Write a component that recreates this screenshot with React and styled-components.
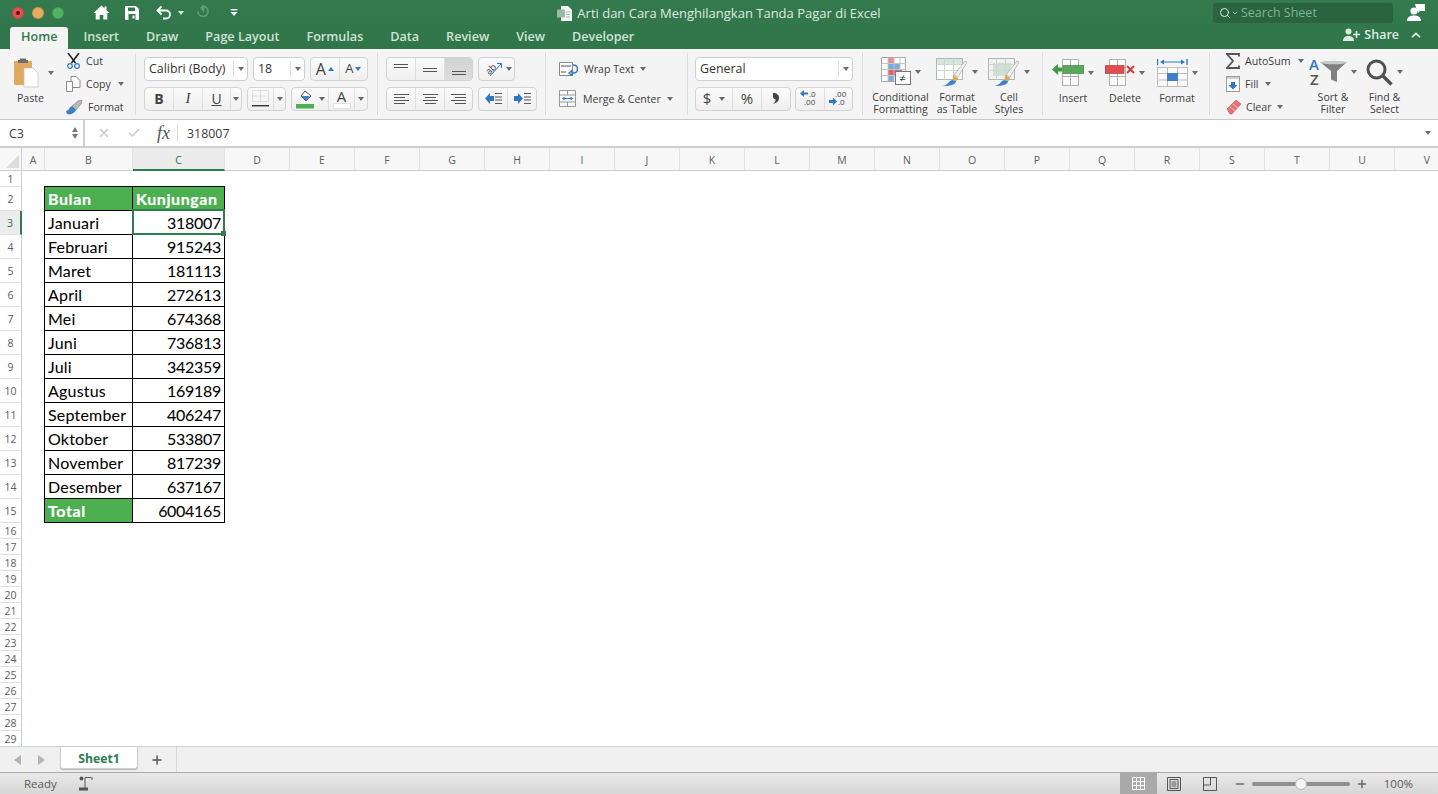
import React from 'react';
import styled, { createGlobalStyle } from 'styled-components';
import { Search, ChevronUp, ChevronDown, Plus, Minus, X, Check } from 'lucide-react';

const GlobalStyle = createGlobalStyle`
  html, body { margin: 0; padding: 0; height: 100%; background: #fff; }
  body { font-family: "Open Sans", "Liberation Sans", sans-serif; color: #3b3b3b; }
  * { box-sizing: border-box; }
`;

const Page = styled.div`
  width: 1438px;
  height: 794px;
  display: flex;
  flex-direction: column;
  overflow: hidden;
`;

/* window header */
const Header = styled.header`
  height: 49px;
  background: linear-gradient(#35794f, #30764a);
  color: #fff;
`;

const TitleBar = styled.div`
  height: 25px;
  display: grid;
  grid-template-columns: 1fr auto 1fr;
  align-items: center;
`;

const QuickAccess = styled.div`
  display: flex;
  align-items: center;
  padding-left: 12px;
`;

const Light = styled.span`
  width: 12px;
  height: 12px;
  border-radius: 50%;
  margin-right: 8px;
  background: ${p => p.$color};
  display: flex;
  align-items: center;
  justify-content: center;
  box-shadow: inset 0 0 0 1px rgba(0, 0, 0, 0.12);
  &::after {
    content: '';
    display: ${p => (p.$dot ? 'block' : 'none')};
    width: 4px;
    height: 4px;
    border-radius: 50%;
    background: #5d1210;
  }
`;

const Quick = styled.span`
  display: flex;
  align-items: center;
  margin-left: ${p => p.$gap}px;
`;

const DocTitle = styled.div`
  display: flex;
  align-items: center;
  gap: 5px;
  padding-top: 1px;
  font-size: 13px;
  color: #dcebe1;
`;

const TitleRight = styled.div`
  display: flex;
  justify-content: flex-end;
  align-items: center;
  padding-right: 12px;
`;

const SearchBox = styled.div`
  width: 180px;
  height: 20px;
  margin-right: 14px;
  padding-left: 6px;
  border-radius: 3px;
  background: #2a6340;
  display: flex;
  align-items: center;
  font-size: 12.5px;
  font-weight: 500;
  color: #7fb594;
`;

const SearchLabel = styled.span`
  margin-left: 2px;
`;

const TabRow = styled.nav`
  height: 24px;
  display: flex;
  justify-content: space-between;
  align-items: flex-end;
  padding: 0 15px 0 10px;
`;

const Tabs = styled.div`
  display: flex;
  align-items: flex-end;
  gap: 27px;
`;

const Tab = styled.span`
  height: 22px;
  line-height: 20px;
  font-size: 12.6px;
  font-weight: 600;
  color: ${p => (p.$active ? '#2f7a4d' : '#cfe3d6')};
  background: ${p => (p.$active ? '#f4f4f4' : 'transparent')};
  border-radius: 3px 3px 0 0;
  padding: ${p => (p.$active ? '0 11px' : '0')};
  margin-right: ${p => (p.$active ? '-12px' : '0')};
`;

const Share = styled.div`
  height: 24px;
  display: flex;
  align-items: center;
  gap: 4px;
  font-size: 12.5px;
  font-weight: 600;
  color: #dcebe1;
  padding-bottom: 5px;
`;

/* ribbon */
const Ribbon = styled.section`
  height: 71px;
  display: flex;
  background: #f4f4f4;
  border-bottom: 1px solid #c9c9c9;
`;

const Group = styled.div`
  flex: 0 0 ${p => p.$w}px;
  height: 62px;
  margin-top: 4px;
  padding: ${p => (p.$tools ? '0' : '4px')} 0 0 ${p => p.$pad}px;
  border-right: ${p => (p.$last ? 'none' : '1px solid #dcdcdc')};
  display: flex;
  flex-direction: ${p => (p.$stack ? 'column' : 'row')};
  gap: ${p => (p.$stack ? '7px' : '0')};
`;

const Row = styled.div`
  height: 23px;
  display: flex;
  align-items: center;
  gap: ${p => p.$gap ?? 5}px;
`;

const Combo = styled.div`
  width: ${p => p.$w}px;
  height: 24px;
  display: flex;
  align-items: center;
  justify-content: space-between;
  background: #fff;
  border: 1px solid #d0d0d0;
  border-radius: 4px;
  font-size: 12.4px;
  color: #333;
  padding-left: 4px;
`;

const ComboArrow = styled.span`
  width: 14px;
  height: 16px;
  border-left: 1px solid #e0e0e0;
  display: flex;
  align-items: center;
  justify-content: center;
`;

const Caret = styled.span`
  display: inline-block;
  flex: none;
  width: 0;
  height: 0;
  margin-left: ${p => p.$left || 0}px;
  border-left: 3px solid transparent;
  border-right: 3px solid transparent;
  border-top: 4px solid ${p => p.$color || '#6b6b6b'};
  transform: ${p => (p.$up ? 'rotate(180deg)' : 'none')};
`;

const SegGroup = styled.div`
  width: ${p => p.$w}px;
  height: 24px;
  display: flex;
  background: linear-gradient(#fbfbfb, #f0f0f0);
  border: 1px solid #d3d3d3;
  border-radius: 4px;
  overflow: hidden;
`;

const Seg = styled.span`
  flex: ${p => (p.$w ? `0 0 ${p.$w}px` : '1')};
  display: flex;
  align-items: center;
  justify-content: center;
  gap: 2px;
  color: #444;
  background: ${p => (p.$on ? 'linear-gradient(#d2d2d2, #dedede)' : 'transparent')};
  border-right: ${p => (p.$end ? 'none' : '1px solid #dedede')};
`;

const FontLetter = styled.span`
  font-family: ${p => (p.$serif ? '"Liberation Serif", serif' : '"Open Sans", sans-serif')};
  font-size: ${p => p.$size || 14}px;
  font-weight: ${p => (p.$bold ? 700 : 400)};
  font-style: ${p => (p.$italic ? 'italic' : 'normal')};
  text-decoration: ${p => (p.$under ? 'underline' : 'none')};
  line-height: 1;
`;

const ColorLetter = styled.span`
  display: flex;
  flex-direction: column;
  align-items: center;
  font-size: 15px;
  line-height: 14px;
  &::after {
    content: '';
    width: 16px;
    height: 4px;
    background: #fff;
    border: 1px solid #e2e2e2;
  }
`;

const LargeTool = styled.div`
  flex: 0 0 ${p => p.$w}px;
  display: flex;
  flex-direction: column;
  align-items: center;
`;

const PasteTool = styled(LargeTool)`
  align-items: flex-start;
`;

const IconSlot = styled.div`
  height: 39px;
  display: flex;
  align-items: center;
  gap: 4px;
`;

const ToolLabel = styled.div`
  font-size: 10.6px;
  line-height: 12px;
  text-align: center;
  color: #3d3d3d;
  white-space: nowrap;
  margin-left: ${p => p.$left || 0}px;
`;

const SmallList = styled.div`
  flex: 0 0 ${p => p.$w}px;
  margin-left: ${p => p.$left || 0}px;
  display: flex;
  flex-direction: column;
  gap: 7px;
`;

const SmallTool = styled.div`
  height: 16px;
  display: flex;
  align-items: center;
  gap: ${p => p.$gap ?? 5}px;
  font-size: 10.6px;
  color: #3d3d3d;
`;

const WideTool = styled.div`
  display: flex;
  align-items: center;
  gap: 5px;
  font-size: 10.6px;
  color: #3d3d3d;
`;

/* formula bar */
const FormulaBar = styled.div`
  height: 28px;
  display: flex;
  align-items: center;
  background: #fff;
  border-bottom: 2px solid #cfcfcf;
  font-size: 12.4px;
`;

const NameBox = styled.div`
  width: 85px;
  height: 100%;
  padding: 0 5px 0 9px;
  display: flex;
  align-items: center;
  justify-content: space-between;
  border-right: 2px solid #cfcfcf;
`;

const Stepper = styled.div`
  display: flex;
  flex-direction: column;
  gap: 2px;
`;

const StepArrow = styled.span`
  width: 0;
  height: 0;
  border-left: 3px solid transparent;
  border-right: 3px solid transparent;
  border-${p => (p.$up ? 'bottom' : 'top')}: 5px solid #777;
`;

const FormulaTools = styled.div`
  display: flex;
  align-items: center;
  gap: 16px;
  padding-left: 12px;
  color: #c8c8c8;
`;

const Fx = styled.span`
  font-family: "Liberation Serif", serif;
  font-style: italic;
  font-size: 18px;
  line-height: 18px;
  color: #555;
  padding-right: 7px;
  border-right: 1px solid #ddd;
`;

const FormulaValue = styled.span`
  margin-left: 9px;
  flex: 1;
`;

const BarCaret = styled(Caret)`
  margin-right: 7px;
`;

/* sheet */
const Sheet = styled.main`
  flex: 1;
  min-height: 0;
  display: flex;
  flex-direction: column;
  overflow: hidden;
`;

const ColHeader = styled.div`
  height: 23px;
  flex: none;
  display: flex;
  background: #f7f7f7;
  border-bottom: 1px solid #cfcfcf;
`;

const Corner = styled.div`
  flex: 0 0 22px;
  border-right: 1px solid #cfcfcf;
  display: flex;
  align-items: flex-end;
  justify-content: flex-end;
  padding: 0 2px 2px 0;
`;

const ColCell = styled.div`
  flex: 0 0 ${p => p.$w}px;
  display: flex;
  align-items: center;
  justify-content: center;
  font-size: 10.5px;
  padding-top: 2px;
  color: ${p => (p.$on ? '#2b7a4b' : '#5c5c5c')};
  background: ${p => (p.$on ? '#ececec' : 'transparent')};
  border-right: 1px solid #e2e2e2;
  border-bottom: ${p => (p.$on ? '2px solid #2f7d4f' : 'none')};
  margin-bottom: ${p => (p.$on ? '-1px' : '0')};
`;

const SheetBody = styled.div`
  flex: 1;
  min-height: 0;
  display: flex;
`;

const RowHeader = styled.div`
  flex: 0 0 22px;
  border-right: 1px solid #cfcfcf;
`;

const RowCell = styled.div`
  height: ${p => p.$h}px;
  display: flex;
  align-items: center;
  justify-content: center;
  font-size: 10.5px;
  color: ${p => (p.$on ? '#2b7a4b' : '#5c5c5c')};
  background: ${p => (p.$on ? '#ececec' : '#fff')};
  border-bottom: 1px solid #e2e2e2;
  border-right: ${p => (p.$on ? '2px solid #2f7d4f' : 'none')};
  margin-right: ${p => (p.$on ? '-1px' : '0')};
`;

const Canvas = styled.div`
  flex: 1;
  padding: 15px 0 0 22px;
  background: #fff;
`;

const DataTable = styled.div`
  display: grid;
  grid-template-columns: 88px 92px;
  grid-auto-rows: 24px;
  width: 181px;
  border-top: 1px solid #000;
  border-left: 1px solid #000;
`;

const DataCell = styled.div`
  position: relative;
  display: flex;
  align-items: center;
  justify-content: ${p => (p.$num ? 'flex-end' : 'flex-start')};
  padding: 0 3px;
  font-family: Lato, "Open Sans", sans-serif;
  font-size: 16px;
  font-weight: ${p => (p.$head ? 700 : 400)};
  letter-spacing: ${p => (p.$head ? '0.6px' : p.$num ? '-0.3px' : '0.2px')};
  -webkit-text-stroke: ${p => (p.$head ? '0.2px' : '0.05px')};
  color: ${p => (p.$head ? '#fff' : '#000')};
  background: ${p => (p.$head ? '#4caf50' : '#fff')};
  border-right: 1px solid #000;
  border-bottom: 1px solid #000;
  white-space: nowrap;
`;

const Selection = styled.span`
  position: absolute;
  z-index: 1;
  inset: -2px -1px -1px -1px;
  border: 2px solid #2f7d4f;
  &::after {
    content: '';
    position: absolute;
    right: -3px;
    bottom: -3px;
    width: 5px;
    height: 5px;
    background: #2f7d4f;
  }
`;

/* bottom bars */
const TabBar = styled.div`
  height: 26px;
  flex: none;
  display: flex;
  background: #f0f0f0;
  border-top: 1px solid #cfcfcf;
`;

const SheetNav = styled.div`
  width: 60px;
  display: flex;
  align-items: center;
  gap: 17px;
  padding-left: 14px;
`;

const NavArrow = styled.span`
  width: 0;
  height: 0;
  border-top: 5px solid transparent;
  border-bottom: 5px solid transparent;
  border-${p => (p.$left ? 'right' : 'left')}: 7px solid #b4b4b4;
`;

const SheetTab = styled.div`
  width: 78px;
  height: 22px;
  padding-top: 1px;
  display: flex;
  align-items: center;
  justify-content: center;
  font-size: 12.2px;
  font-weight: 700;
  color: #2f7d4f;
  background: #fff;
  border: 1px solid #d0d0d0;
  border-top: none;
  border-radius: 0 0 3px 3px;
  box-shadow: 0 1px 1px rgba(0, 0, 0, 0.25);
`;

const AddSheet = styled.div`
  width: 39px;
  display: flex;
  align-items: center;
  justify-content: center;
  color: #555;
  border-right: 1px solid #d8d8d8;
`;

const StatusBar = styled.footer`
  height: 22px;
  flex: none;
  display: flex;
  align-items: center;
  justify-content: space-between;
  padding-left: 24px;
  background: linear-gradient(#e9e9e9, #d6d6d6);
  border-top: 1px solid #a9a9a9;
  font-size: 11.5px;
  color: #5a5a5a;
`;

const StatusLeft = styled.div`
  display: flex;
  align-items: center;
  gap: 22px;
`;

const StatusRight = styled.div`
  height: 100%;
  display: flex;
  align-items: center;
  padding-right: 25px;
`;

const ViewButton = styled.span`
  width: ${p => p.$w}px;
  height: 100%;
  display: flex;
  align-items: center;
  justify-content: center;
  background: ${p => (p.$on ? '#a9a9a9' : 'transparent')};
`;

const ZoomMinus = styled(Minus)`
  margin-left: 6px;
`;

const ZoomTrack = styled.div`
  position: relative;
  width: 98px;
  height: 4px;
  margin: 0 6px;
  border-radius: 2px;
  background: #8f8f8f;
`;

const ZoomThumb = styled.span`
  position: absolute;
  left: 43px;
  top: -4px;
  width: 12px;
  height: 12px;
  border-radius: 50%;
  background: #f5f5f5;
  border: 1px solid #b5b5b5;
`;

const ZoomValue = styled.span`
  margin-left: 16px;
`;

/* icons */
const HomeIcon = () => (
  <svg width="17" height="15" viewBox="0 0 17 15"><path d="M8.500 .5 .5 8h2.200v6.500h4V10h3.600v4.500h4V8h2.200l-3-2.800V1.500h-2v1.900z" fill="#fff" /></svg>
);
const SaveIcon = () => (
  <svg width="14" height="14" viewBox="0 0 14 14"><path d="M1 0h10l3 3v10a1 1 0 0 1-1 1H1a1 1 0 0 1-1-1V1a1 1 0 0 1 1-1z" fill="#fff" /><rect x="3" y="1.500" width="7" height="3.500" fill="#33784d" /><rect x="3.500" y="8" width="7" height="6" fill="#33784d" /><rect x="7.500" y="9.500" width="2" height="3" fill="#fff" /></svg>
);
const UndoIcon = () => (
  <svg width="16" height="15" viewBox="0 0 16 15">
    <path d="M5.500 1.500 1.500 5.500l4 4M1.500 5.500H10a4 4 0 0 1 0 8H7" fill="none" stroke="#fff" strokeWidth="1.800" />
  </svg>
);
const RedoIcon = () => (
  <svg width="15" height="15" viewBox="0 0 15 15">
    <path d="M6.500 1.500h2.500a5 5 0 1 1-6 5" fill="none" stroke="#5f9b78" strokeWidth="1.800" />
    <path d="M9.500 0 9 8 5 2.500z" fill="#5f9b78" />
  </svg>
);
const QatIcon = () => (
  <svg width="8" height="8" viewBox="0 0 8 8"><rect x=".5" y="0" width="7" height="1.400" fill="#fff" /><path d="M.5 3h7L4 7z" fill="#fff" /></svg>
);
const DocIcon = () => (
  <svg width="15" height="15" viewBox="0 0 15 15">
    <path d="M4 0h7l4 4v11H4z" fill="#f3f6f4" />
    <rect x="0" y="3.500" width="8" height="8" fill="#9fb8a8" />
    <path d="M9 6h4M9 8.500h4M9 11h4" stroke="#9fb8a8" />
  </svg>
);
const PersonBubbleIcon = () => (
  <svg width="19" height="19" viewBox="0 0 19 19">
    <circle cx="7" cy="8" r="3.600" fill="#fff" />
    <path d="M0 18c0-4 3-5.500 7-5.500s7 1.500 7 5.500z" fill="#fff" />
    <path d="M8 1h10v7h-5l-2 2V8H10z" fill="#fff" />
  </svg>
);
const PersonPlusIcon = () => (
  <svg width="17" height="13" viewBox="0 0 17 13">
    <circle cx="5.500" cy="3.500" r="3" fill="#dcebe1" />
    <path d="M0 13c0-3.500 2-5 5.500-5s5.500 1.500 5.500 5z" fill="#dcebe1" />
    <path d="M10 6.500h7M13.500 3v7" stroke="#dcebe1" strokeWidth="1.600" />
  </svg>
);
const PasteIcon = () => (
  <svg width="25" height="31" viewBox="0 0 25 31">
    <rect x="0" y="4" width="18" height="24" rx="1" fill="#e0a95f" />
    <path d="M6 3V1.500h6V3h2v3H4V3z" fill="#6e6e6e" />
    <path d="M10 11h9l5 5v14H10z" fill="#fff" stroke="#bdbdbd" strokeWidth=".7" />
  </svg>
);
const ScissorsIcon = () => (
  <svg width="15" height="16" viewBox="0 0 15 16">
    <path d="M2 0 9.500 10M13 0 5.500 10" stroke="#222" strokeWidth="1.600" fill="none" />
    <circle cx="4" cy="13" r="2.300" fill="none" stroke="#2f78c4" strokeWidth="1.200" />
    <circle cx="11" cy="13" r="2.300" fill="none" stroke="#2f78c4" strokeWidth="1.200" />
  </svg>
);
const CopyIcon = () => (
  <svg width="15" height="16" viewBox="0 0 15 16">
    <path d="M5 .5h5l4 4v7H5z" fill="#fafafa" stroke="#8c8c8c" />
    <path d="M.5 5.500h6v10h-6z" fill="#fafafa" stroke="#8c8c8c" />
  </svg>
);
const BrushIcon = () => (
  <svg width="17" height="15" viewBox="0 0 17 15">
    <path d="M6 6 12 1l4-1-1 4-5 6z" fill="#b9b9b9" stroke="#7d7d7d" strokeWidth=".6" />
    <path d="M0 11c3 0 3-4 6-5l4 4c-1 3-5 5-9 4z" fill="#3e7fc4" />
  </svg>
);
const Lines = ({ w = 14, h = 12, rows, color = '#555' }) => (
  <svg width={w} height={h} viewBox={`0 0 ${w} ${h}`}>
    {rows.map(([x1, x2, y]) => <rect key={`${x1}-${y}`} x={x1} y={y} width={x2 - x1} height="1" fill={color} />)}
  </svg>
);
const BorderIcon = () => (
  <svg width="17" height="17" viewBox="0 0 17 17">
    <path d="M.5 .5h16v11H.5zM8.500 .5v11M.5 6h16" fill="none" stroke="#c4c4c4" strokeDasharray="1 1" />
    <rect x="0" y="15" width="17" height="1.400" fill="#333" />
  </svg>
);
const FillIcon = () => (
  <svg width="18" height="20" viewBox="0 0 18 20">
    <path d="M5 7 9 2l6 5-5 5z" fill="#fff" stroke="#555" />
    <path d="M5 7h9l-4 5z" fill="#3f82c9" />
    <rect x="0" y="15" width="18" height="4.500" fill="#4caf50" />
  </svg>
);
const OrientIcon = () => (
  <svg width="22" height="22" viewBox="0 0 22 22">
    <text x="3" y="15" fontSize="9.500" fill="#444" fontFamily="Open Sans" transform="rotate(-45 8 11)">ab</text>
    <path d="M8 18 19 6M15 5.500h4.500V10" fill="none" stroke="#2f78c4" />
  </svg>
);
const IndentIcon = ({ right }) => (
  <svg width="17" height="11" viewBox="0 0 17 11">
    <path d={right ? 'M0 3h4V0l5 5.500-5 5.500V8H0z' : 'M9 3H5V0L0 5.500 5 11V8h4z'} fill="#2f78c4" />
    <path d="M10 .5h7M10 4h7M10 7h7M10 10.500h7" stroke="#555" />
  </svg>
);
const WrapIcon = () => (
  <svg width="20" height="14" viewBox="0 0 20 14">
    <path d="M.5 .5h13v13H.5z" fill="#fff" stroke="#888" />
    <path d="M2 4h10M2 10h5" stroke="#555" />
    <path d="M14 3c6 0 6 8 0 8M10 11l3-2.500v5z" fill="none" stroke="#2f78c4" strokeWidth="1.400" />
  </svg>
);
const MergeIcon = () => (
  <svg width="17" height="17" viewBox="0 0 17 17">
    <path d="M.5 .5h16v16H.5zM.5 5h16M.5 12h16M8.500 .5V5M8.500 12v4.500" fill="#fafafa" stroke="#999" />
    <path d="M3.500 8.500h10" stroke="#2f78c4" />
    <path d="M3 8.500 5.500 6.500v4zM14 8.500 11.500 6.500v4z" fill="#2f78c4" />
  </svg>
);
const CommaIcon = () => (
  <svg width="8" height="11" viewBox="0 0 8 11">
    <path d="M1 0c4 0 6 2 6 5s-2 5-6 6c2-2 3-3 2.500-4.500C2 6 1 5 1 3.500 1 2 1 1 1 0z" fill="#444" />
  </svg>
);
const DecimalIcon = ({ more }) => (
  <svg width="22" height="21" viewBox="0 0 22 21" fontFamily="Open Sans" fontSize="8" fill="#444">
    <text x={more ? 7 : 10} y="9">{more ? '.00' : '.0'}</text>
    <text x={more ? 10 : 5} y="17">{more ? '.0' : '.00'}</text>
    <path d={more ? 'M1 12h4V9.500l4 4-4 4V15H1z' : 'M9 4.500H5V2L1 5.500 5 9V6.500h4z'} fill="#2f78c4" />
  </svg>
);
const CondIcon = () => (
  <svg width="30" height="30" viewBox="0 0 30 30">
    <path d="M.5 .5h24v24H.5z" fill="#fff" stroke="#aaa" />
    <rect x="7" y="1" width="6" height="6" fill="#ec8a94" />
    <rect x="7" y="6" width="12" height="6" fill="#79ade0" />
    <rect x="7" y="12" width="14" height="6" fill="#e4606d" />
    <rect x="7" y="18" width="6" height="6" fill="#79ade0" />
    <path d="M7 .5v24M13 .5v24M19 .5v24M.5 6.500h24M.5 12.500h24M.5 18.500h24" stroke="#c4c4c4" fill="none" />
    <rect x="14.500" y="14.500" width="15" height="13" fill="#fff" stroke="#777" />
    <text x="18" y="25" fontSize="11" fill="#333" fontFamily="Open Sans">≠</text>
  </svg>
);
const TableBrushIcon = ({ dots }) => (
  <svg width="32" height="29" viewBox="0 0 32 29">
    <rect x=".5" y=".5" width="26" height="21" fill={dots ? '#eef3ef' : '#fff'} stroke="#b5b5b5" />
    {!dots && <rect x="1" y="1" width="25" height="5" fill="#d5e8dc" />}
    {dots && <rect x="5" y="5" width="18" height="13" fill="#cfe0d5" />}
    <path d="M.5 6.500h26M.5 12.500h26M8.500 .5v21M17.500 .5v21" stroke="#cdd6d0" fill="none" />
    <path d="M18 17 29 3l2 1-9 15z" fill="#f2f2f2" stroke="#999" strokeWidth=".6" />
    <path d="M17 17l5 3-1.500 3-4-1z" fill="#e6a552" />
    <path d="M6 28c5 0 7-5 10-6l4 1c0 3-4 5-14 5z" fill="#3f82c9" />
  </svg>
);
const InsertIcon = () => (
  <svg width="32" height="27" viewBox="0 0 32 27">
    <path d="M10.500 .5h16v26h-16zM10.500 8.500h16M10.500 17.500h16M18.500 .5v26" fill="#fafafa" stroke="#b0b0b0" />
    <rect x="11" y="6.500" width="21" height="8" fill="#5aa65a" stroke="#3f8b45" strokeWidth=".7" />
    <path d="M0 10.500 6 5v3.500h4v4H6V16z" fill="#3f9a45" />
  </svg>
);
const DeleteIcon = () => (
  <svg width="30" height="27" viewBox="0 0 30 27">
    <path d="M4.500 .5h16v26h-16zM4.500 8.500h16M4.500 17.500h16M12.500 .5v26" fill="#fafafa" stroke="#b0b0b0" />
    <rect x="0" y="6.500" width="19" height="8" fill="#dc4f52" stroke="#bf3c3f" strokeWidth=".7" />
    <path d="M22 7l7 7M29 7l-7 7" stroke="#d23f3f" strokeWidth="2" />
  </svg>
);
const FormatIcon = () => (
  <svg width="31" height="29" viewBox="0 0 31 29">
    <path d="M.5 1v6M30 1v6" stroke="#2f78c4" strokeWidth="1.400" />
    <path d="M5 4h21" stroke="#2f78c4" />
    <path d="M3 4 7 1.500v5zM28 4 24 1.500v5z" fill="#2f78c4" />
    <path d="M.5 9.500h30v19H.5zM10.500 9.500v19M20.500 9.500v19M.5 15.500h30M.5 22h30" fill="#fafafa" stroke="#bdbdbd" />
    <rect x="10" y="15" width="11" height="8" fill="#3f82c9" />
  </svg>
);
const SigmaIcon = () => (
  <svg width="14" height="16" viewBox="0 0 14 16"><path d="M13 3.500V1H1l6 7-6 7h12v-2.500" fill="none" stroke="#555" strokeWidth="1.800" /></svg>
);
const FillDownIcon = () => (
  <svg width="14" height="16" viewBox="0 0 14 16">
    <rect x=".5" y=".5" width="13" height="15" fill="#fff" stroke="#9a9a9a" />
    <rect x="1" y="1" width="12" height="2" fill="#cfcfcf" />
    <path d="M5 6h4v3h2.500L7 13.500 2.500 9H5z" fill="#2f78c4" />
  </svg>
);
const EraserIcon = () => (
  <svg width="16" height="16" viewBox="0 0 16 16">
    <path d="M1 10 10 1l5 4-9 10H4z" fill="#e8707a" stroke="#c95560" strokeWidth=".6" />
    <path d="M4 8l5 4M7 5l5 4" stroke="#f4b6bb" />
  </svg>
);
const SortIcon = () => (
  <svg width="38" height="30" viewBox="0 0 38 30" fontFamily="Open Sans" fontWeight="600">
    <text x="0" y="13" fontSize="15" fill="#2f78c4">A</text>
    <text x="1" y="28" fontSize="15" fill="#555">Z</text>
    <path d="M11 5h27l-10 9v11l-6-2.500V14z" fill="#808080" />
    <ellipse cx="24.500" cy="5.500" rx="13" ry="1.800" fill="#c9c9c9" />
  </svg>
);
const MagnifierIcon = () => (
  <svg width="27" height="27" viewBox="0 0 27 27">
    <circle cx="10.500" cy="10.500" r="8.500" fill="none" stroke="#505050" strokeWidth="3" />
    <path d="M17 17 25.500 25.500" stroke="#505050" strokeWidth="3.400" />
  </svg>
);
const MacroIcon = () => (
  <svg width="15" height="15" viewBox="0 0 15 15">
    <circle cx="2.500" cy="2.500" r="2" fill="#555" />
    <path d="M6 1.500h6M6 1.500v11M13 1v3" stroke="#555" fill="none" />
    <rect x="0" y="11.500" width="9" height="3" fill="#555" />
  </svg>
);
const GridViewIcon = () => (
  <svg width="13" height="13" viewBox="0 0 13 13"><path d="M.5 .5h12v12H.5zM4.500 .5v12M8.500 .5v12M.5 4.500h12M.5 8.500h12" fill="none" stroke="#fff" /></svg>
);
const PageViewIcon = () => (
  <svg width="14" height="14" viewBox="0 0 14 14"><path d="M.5 .5h13v13H.5zM3 2.500h8v9H3zM4.500 5h5M4.500 7h5M4.500 9h5" fill="none" stroke="#555" /></svg>
);
const BreakViewIcon = () => (
  <svg width="14" height="14" viewBox="0 0 14 14"><path d="M.5 .5h13v13H.5zM.5 8h7V.5" fill="none" stroke="#555" /></svg>
);
const CornerMark = () => (
  <svg width="13" height="13" viewBox="0 0 13 13"><path d="M13 0v13H0z" fill="#dcdcdc" /></svg>
);

const topTabs = ['Insert', 'Draw', 'Page Layout', 'Formulas', 'Data', 'Review', 'View', 'Developer'];
const columns = [['A', 23], ['B', 88], ['C', 92], ...'DEFGHIJKLMNOPQRSTUV'.split('').map(c => [c, 65])];
const rowHeights = Array.from({ length: 29 }, (_, i) => (i === 0 || i > 14 ? 16 : 24));
const data = [
  ['Januari', 318007], ['Februari', 915243], ['Maret', 181113], ['April', 272613],
  ['Mei', 674368], ['Juni', 736813], ['Juli', 342359], ['Agustus', 169189],
  ['September', 406247], ['Oktober', 533807], ['November', 817239], ['Desember', 637167],
];

const App = () => (
  <Page>
    <GlobalStyle />
    <Header>
      <TitleBar>
        <QuickAccess>
          <Light $color="#e0534e" $dot />
          <Light $color="#e5ad5c" />
          <Light $color="#4fb45f" />
          <Quick $gap={21}><HomeIcon /></Quick>
          <Quick $gap={15}><SaveIcon /></Quick>
          <Quick $gap={17}><UndoIcon /></Quick>
          <Quick $gap={6}><Caret $color="#dcebe1" /></Quick>
          <Quick $gap={11}><RedoIcon /></Quick>
          <Quick $gap={20}><QatIcon /></Quick>
        </QuickAccess>
        <DocTitle><DocIcon />Arti dan Cara Menghilangkan Tanda Pagar di Excel</DocTitle>
        <TitleRight>
          <SearchBox>
            <Search size={12} color="#dcebe1" />
            <ChevronDown size={8} color="#dcebe1" />
            <SearchLabel>Search Sheet</SearchLabel>
          </SearchBox>
          <PersonBubbleIcon />
        </TitleRight>
      </TitleBar>
      <TabRow>
        <Tabs>
          <Tab $active>Home</Tab>
          {topTabs.map(t => <Tab key={t}>{t}</Tab>)}
        </Tabs>
        <Share>
          <PersonPlusIcon />
          Share
          <ChevronUp size={14} strokeWidth={3} style={{ marginLeft: 6 }} />
        </Share>
      </TabRow>
    </Header>

    <Ribbon>
      <Group $w={136} $pad={14} $tools>
        <PasteTool $w={40}>
          <IconSlot><PasteIcon /><Caret $left={5} /></IconSlot>
          <ToolLabel $left={3}>Paste</ToolLabel>
        </PasteTool>
        <SmallList $w={68} $left={12}>
          <SmallTool><ScissorsIcon />Cut</SmallTool>
          <SmallTool><CopyIcon />Copy<Caret $left={2} /></SmallTool>
          <SmallTool><BrushIcon />Format</SmallTool>
        </SmallList>
      </Group>

      <Group $w={242} $pad={8} $stack>
        <Row>
          <Combo $w={104}>Calibri (Body)<ComboArrow><Caret /></ComboArrow></Combo>
          <Combo $w={52}>18<ComboArrow><Caret /></ComboArrow></Combo>
          <SegGroup $w={58}>
            <Seg><FontLetter $size={16}>A</FontLetter><Caret $up $color="#2f78c4" /></Seg>
            <Seg $end><FontLetter $size={13}>A</FontLetter><Caret $color="#2f78c4" /></Seg>
          </SegGroup>
        </Row>
        <Row>
          <SegGroup $w={98}>
            <Seg $w={29}><FontLetter $bold>B</FontLetter></Seg>
            <Seg $w={29}><FontLetter $serif $italic $size={15}>I</FontLetter></Seg>
            <Seg $w={28}><FontLetter $under>U</FontLetter></Seg>
            <Seg $end><Caret /></Seg>
          </SegGroup>
          <SegGroup $w={39}>
            <Seg $w={26}><BorderIcon /></Seg>
            <Seg $end><Caret /></Seg>
          </SegGroup>
          <SegGroup $w={77}>
            <Seg $w={37}><FillIcon /><Caret $left={3} /></Seg>
            <Seg $w={26}><ColorLetter>A</ColorLetter></Seg>
            <Seg $end><Caret /></Seg>
          </SegGroup>
        </Row>
      </Group>

      <Group $w={168} $pad={8} $stack>
        <Row>
          <SegGroup $w={87}>
            <Seg $w={29}><Lines rows={[[0, 14, 1], [0, 14, 4]]} /></Seg>
            <Seg $w={29}><Lines rows={[[0, 14, 5], [0, 14, 8]]} /></Seg>
            <Seg $on $end><Lines rows={[[0, 14, 8], [0, 14, 11]]} /></Seg>
          </SegGroup>
          <SegGroup $w={37}>
            <Seg $end><OrientIcon /><Caret /></Seg>
          </SegGroup>
        </Row>
        <Row>
          <SegGroup $w={87}>
            <Seg $w={29}><Lines w={15} rows={[[0, 15, 1], [0, 11, 4], [0, 15, 7], [0, 11, 10]]} /></Seg>
            <Seg $w={29}><Lines w={15} rows={[[0, 15, 1], [2, 13, 4], [0, 15, 7], [2, 13, 10]]} /></Seg>
            <Seg $end><Lines w={15} rows={[[0, 15, 1], [4, 15, 4], [0, 15, 7], [4, 15, 10]]} /></Seg>
          </SegGroup>
          <SegGroup $w={59}>
            <Seg $w={29}><IndentIcon /></Seg>
            <Seg $end><IndentIcon right /></Seg>
          </SegGroup>
        </Row>
      </Group>

      <Group $w={142} $pad={13} $stack>
        <Row>
          <WideTool><WrapIcon />Wrap Text<Caret $left={1} /></WideTool>
        </Row>
        <Row>
          <WideTool><MergeIcon /><SearchLabel>Merge &amp; Center</SearchLabel><Caret $left={1} /></WideTool>
        </Row>
      </Group>

      <Group $w={175} $pad={7} $stack>
        <Row>
          <Combo $w={158}>General<ComboArrow><Caret /></ComboArrow></Combo>
        </Row>
        <Row $gap={4}>
          <SegGroup $w={96}>
            <Seg $w={37}><FontLetter $size={15}>$</FontLetter><Caret $left={6} /></Seg>
            <Seg $w={29}><FontLetter $size={15}>%</FontLetter></Seg>
            <Seg $end><CommaIcon /></Seg>
          </SegGroup>
          <SegGroup $w={58}>
            <Seg $w={29}><DecimalIcon /></Seg>
            <Seg $end><DecimalIcon more /></Seg>
          </SegGroup>
        </Row>
      </Group>

      <Group $w={180} $pad={9} $tools>
        <LargeTool $w={57}>
          <IconSlot><CondIcon /><Caret /></IconSlot>
          <ToolLabel>Conditional<br />Formatting</ToolLabel>
        </LargeTool>
        <LargeTool $w={56}>
          <IconSlot><TableBrushIcon /><Caret /></IconSlot>
          <ToolLabel>Format<br />as Table</ToolLabel>
        </LargeTool>
        <LargeTool $w={48}>
          <IconSlot><TableBrushIcon dots /><Caret /></IconSlot>
          <ToolLabel>Cell<br />Styles</ToolLabel>
        </LargeTool>
      </Group>

      <Group $w={167} $pad={4} $tools>
        <LargeTool $w={52}>
          <IconSlot><InsertIcon /><Caret /></IconSlot>
          <ToolLabel>Insert</ToolLabel>
        </LargeTool>
        <LargeTool $w={52}>
          <IconSlot><DeleteIcon /><Caret /></IconSlot>
          <ToolLabel>Delete</ToolLabel>
        </LargeTool>
        <LargeTool $w={52}>
          <IconSlot><FormatIcon /><Caret /></IconSlot>
          <ToolLabel>Format</ToolLabel>
        </LargeTool>
      </Group>

      <Group $w={228} $pad={16} $tools $last>
        <SmallList $w={81}>
          <SmallTool><SigmaIcon />AutoSum<Caret $left={3} /></SmallTool>
          <SmallTool><FillDownIcon />Fill<Caret $left={1} /></SmallTool>
          <SmallTool $gap={4}><EraserIcon />Clear<Caret $left={1} /></SmallTool>
        </SmallList>
        <LargeTool $w={52}>
          <IconSlot><SortIcon /><Caret /></IconSlot>
          <ToolLabel>Sort &amp;<br />Filter</ToolLabel>
        </LargeTool>
        <LargeTool $w={51}>
          <IconSlot><MagnifierIcon /><Caret /></IconSlot>
          <ToolLabel>Find &amp;<br />Select</ToolLabel>
        </LargeTool>
      </Group>
    </Ribbon>

    <FormulaBar>
      <NameBox>
        C3
        <Stepper><StepArrow $up /><StepArrow /></Stepper>
      </NameBox>
      <FormulaTools>
        <X size={14} strokeWidth={2.5} />
        <Check size={14} strokeWidth={2.5} />
        <Fx>fx</Fx>
      </FormulaTools>
      <FormulaValue>318007</FormulaValue>
      <BarCaret />
    </FormulaBar>

    <Sheet>
      <ColHeader>
        <Corner><CornerMark /></Corner>
        {columns.map(([name, w]) => <ColCell key={name} $w={w} $on={name === 'C'}>{name}</ColCell>)}
      </ColHeader>
      <SheetBody>
        <RowHeader>
          {rowHeights.map((h, i) => <RowCell key={i} $h={h} $on={i === 2}>{i + 1}</RowCell>)}
        </RowHeader>
        <Canvas>
          <DataTable>
            <DataCell $head>Bulan</DataCell>
            <DataCell $head>Kunjungan</DataCell>
            {data.map(([month, visits], i) => (
              <React.Fragment key={month}>
                <DataCell>{month}</DataCell>
                <DataCell $num>{visits}{i === 0 && <Selection />}</DataCell>
              </React.Fragment>
            ))}
            <DataCell $head>Total</DataCell>
            <DataCell $num>6004165</DataCell>
          </DataTable>
        </Canvas>
      </SheetBody>
    </Sheet>

    <TabBar>
      <SheetNav><NavArrow $left /><NavArrow /></SheetNav>
      <SheetTab>Sheet1</SheetTab>
      <AddSheet><Plus size={14} strokeWidth={2.5} /></AddSheet>
    </TabBar>

    <StatusBar>
      <StatusLeft>Ready<MacroIcon /></StatusLeft>
      <StatusRight>
        <ViewButton $w={37} $on><GridViewIcon /></ViewButton>
        <ViewButton $w={35}><PageViewIcon /></ViewButton>
        <ViewButton $w={36}><BreakViewIcon /></ViewButton>
        <ZoomMinus size={12} strokeWidth={3} color="#666" />
        <ZoomTrack><ZoomThumb /></ZoomTrack>
        <Plus size={12} strokeWidth={3} color="#666" />
        <ZoomValue>100%</ZoomValue>
      </StatusRight>
    </StatusBar>
  </Page>
);

export default App;
